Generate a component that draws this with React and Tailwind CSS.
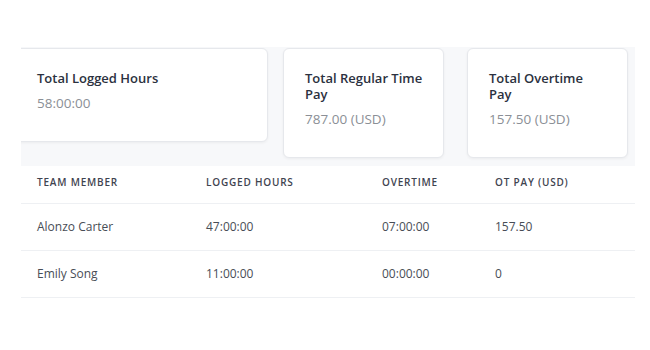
const stats = [
  { label: 'Total Logged Hours', value: '58:00:00', w: 'w-[253px] -ml-[6px]' },
  { label: 'Total Regular Time Pay', value: '787.00 (USD)', w: 'w-[161px] ml-[15px]' },
  { label: 'Total Overtime Pay', value: '157.50 (USD)', w: 'w-[161px] ml-[23px]' },
]

const rows = [
  { name: 'Alonzo Carter', logged: '47:00:00', ot: '07:00:00', pay: '157.50' },
  { name: 'Emily Song', logged: '11:00:00', ot: '00:00:00', pay: '0' },
]

const cols = 'grid grid-cols-[185px_176px_113px_1fr]'

export default function App() {
  return (
    <div className="w-[650px] h-[350px] bg-white overflow-hidden" style={{ fontFamily: '"Open Sans", "Liberation Sans", sans-serif' }}>
      <div className="pt-[47px] pl-[21px] w-[635px]">
        {/* cartões de resumo */}
        <div className="bg-[#f7f8fa] overflow-hidden pt-px pb-2 flex items-start">
          {stats.map(s => (
            <div key={s.label} className={`${s.w} shrink-0 bg-white border border-[#e6e8ec] rounded-md shadow-[0_1px_3px_rgba(0,0,0,0.05)] pt-[21px] pb-[29px] pl-[21px] pr-[20px]`}>
              <div className="text-[13px] leading-[16px] font-semibold text-[#2b3140]">{s.label}</div>
              <div className="mt-2 text-[13.5px] leading-[18px] text-[#8b8f96]">{s.value}</div>
            </div>
          ))}
        </div>

        {/* tabela */}
        <div className={`${cols} h-[38px] items-center pb-[5px] border-b border-[#eef0f3] text-[10px] font-semibold tracking-[0.8px] text-[#3f4450]`}>
          <div className="pl-4">TEAM MEMBER</div>
          <div>LOGGED HOURS</div>
          <div>OVERTIME</div>
          <div>OT PAY (USD)</div>
        </div>
        {rows.map(r => (
          <div key={r.name} className={`${cols} h-[47px] items-center border-b border-[#eef0f3] text-[12px] text-[#484d56]`}>
            <div className="pl-4">{r.name}</div>
            <div>{r.logged}</div>
            <div>{r.ot}</div>
            <div>{r.pay}</div>
          </div>
        ))}
      </div>
    </div>
  )
}
